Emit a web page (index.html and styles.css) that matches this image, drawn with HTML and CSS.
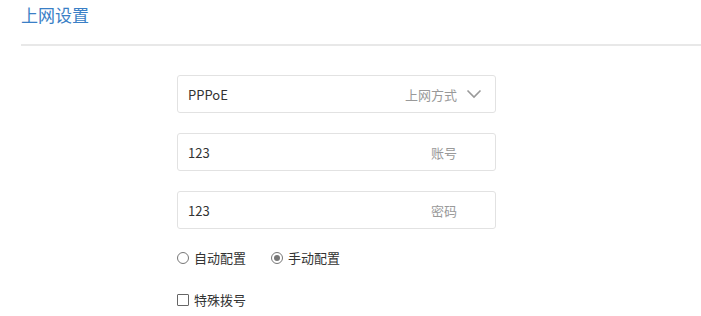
FILE: index.html
```html
<!DOCTYPE html>
<html lang="zh-CN">
<head>
    <meta charset="UTF-8">
    <title>上网设置</title>
    <link rel="stylesheet" href="styles.css">
</head>
<body>

    <!-- 标题 -->
    <div class="header">
        <h1>上网设置</h1>
    </div>

    <!-- 表单 -->
    <div class="form">
        <div class="field">
            <span class="value">PPPoE</span>
            <span class="label">上网方式</span>
            <svg class="arrow" width="16" height="10" viewBox="0 0 16 10">
                <polyline points="1.5,1.5 8,8 14.5,1.5" fill="none" stroke="#999" stroke-width="1.6"/>
            </svg>
        </div>
        <div class="field">
            <span class="value">123</span>
            <span class="label">账号</span>
        </div>
        <div class="field">
            <span class="value">123</span>
            <span class="label">密码</span>
        </div>

        <div class="options">
            <label class="opt"><span class="radio"></span>自动配置</label>
            <label class="opt"><span class="radio checked"></span>手动配置</label>
        </div>
        <div class="options">
            <label class="opt"><span class="check"></span>特殊拨号</label>
        </div>
    </div>

</body>
</html>
```

FILE: styles.css
```css
body {
    margin: 0;
    font-family: "Noto Sans CJK SC", "Noto Sans", sans-serif;
    font-size: 13px;
    color: #333;
    background: #fff;
}

/* 标题 */
.header {
    margin-left: 21px;
    height: 44px;
    border-bottom: 2px solid #e8e8e8;
}
.header h1 {
    margin: 0;
    padding-top: 3px;
    font-size: 17px;
    font-weight: normal;
    line-height: 24px;
    color: #3a7fc6;
}

/* 表单 */
.form {
    width: 319px;
    margin: 29px 0 0 177px;
}
.field {
    display: flex;
    align-items: center;
    height: 38px;
    box-sizing: border-box;
    padding: 0 13px 0 10px;
    margin-bottom: 20px;
    border: 1px solid #e2e2e2;
    border-radius: 3px;
}
.field .value {
    flex: 1;
}
.field .label {
    color: #999;
    margin-right: 25px;
}
.field .label + .arrow {
    margin-left: 9px;
}
.field:first-child .label {
    margin-right: 0;
}

.options {
    display: flex;
    gap: 25px;
    margin-top: 1px;
    margin-bottom: 24px;
    line-height: 18px;
}
.options:last-child {
    margin-bottom: 0;
}
.opt {
    display: flex;
    align-items: center;
}
.radio {
    width: 10px;
    height: 10px;
    border: 1px solid #777;
    border-radius: 50%;
    margin-right: 5px;
    position: relative;
}
.radio.checked::after {
    content: "";
    position: absolute;
    left: 2px;
    top: 2px;
    width: 6px;
    height: 6px;
    border-radius: 50%;
    background: #777;
}
.check {
    width: 10px;
    height: 10px;
    border: 1px solid #666;
    border-radius: 1px;
    margin-right: 5px;
}
```
